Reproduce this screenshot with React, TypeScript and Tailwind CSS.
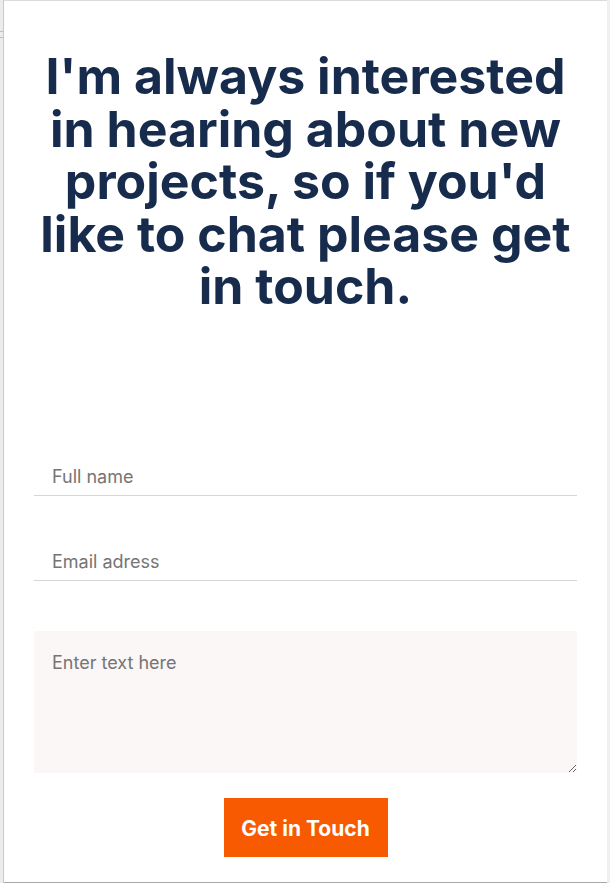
export default function App() {
  return (
    <div className="min-h-[883px] w-[610px] bg-white flex" style={{ fontFamily: "Inter, 'Noto Sans', sans-serif" }}>
      {/* left window edge */}
      <div className="w-[4px] shrink-0 bg-[#ececec] border-r border-[#c9c9c9] flex flex-col">
        <div className="h-[31px]" />
        <div className="h-px bg-[#bdbdbd]" />
        <div className="h-[5px]" />
        <div className="h-px bg-[#bdbdbd]" />
      </div>

      <div className="flex-1 flex flex-col border-t border-[#dcdcdc] border-b border-b-[#a8a8a8]">
        <div className="flex-1 px-[30px] pt-[49px] flex flex-col">
          <h1 className="text-center text-[50px] leading-[52.5px] font-bold text-[#172b4d]">
            I'm always interested in hearing about new projects, so if you'd like to chat please get in touch.
          </h1>

          <form className="mt-[143px] flex flex-col">
            <input
              type="text"
              placeholder="Full name"
              className="h-[40px] px-[18px] pt-[2px] text-[18px] text-[#333] placeholder:text-[#757575] border-b border-[#d6d6d6] outline-none bg-transparent"
            />
            <input
              type="email"
              placeholder="Email adress"
              className="mt-[45px] h-[40px] px-[18px] pt-[2px] text-[18px] text-[#333] placeholder:text-[#757575] border-b border-[#d6d6d6] outline-none bg-transparent"
            />
            <textarea
              placeholder="Enter text here"
              className="mt-[50px] h-[142px] px-[18px] pt-[18px] text-[18px] text-[#333] placeholder:text-[#757575] bg-[#fcf7f7] outline-none"
            />
            <div className="flex justify-center mt-[25px]">
              <button
                type="button"
                className="w-[164px] h-[59px] pt-[3px] bg-[#f75a00] text-white text-[21px] font-bold"
              >
                Get in Touch
              </button>
            </div>
          </form>
        </div>
      </div>

      {/* right window edge */}
      <div className="w-[3px] shrink-0 bg-[#efefef]" />
    </div>
  );
}
